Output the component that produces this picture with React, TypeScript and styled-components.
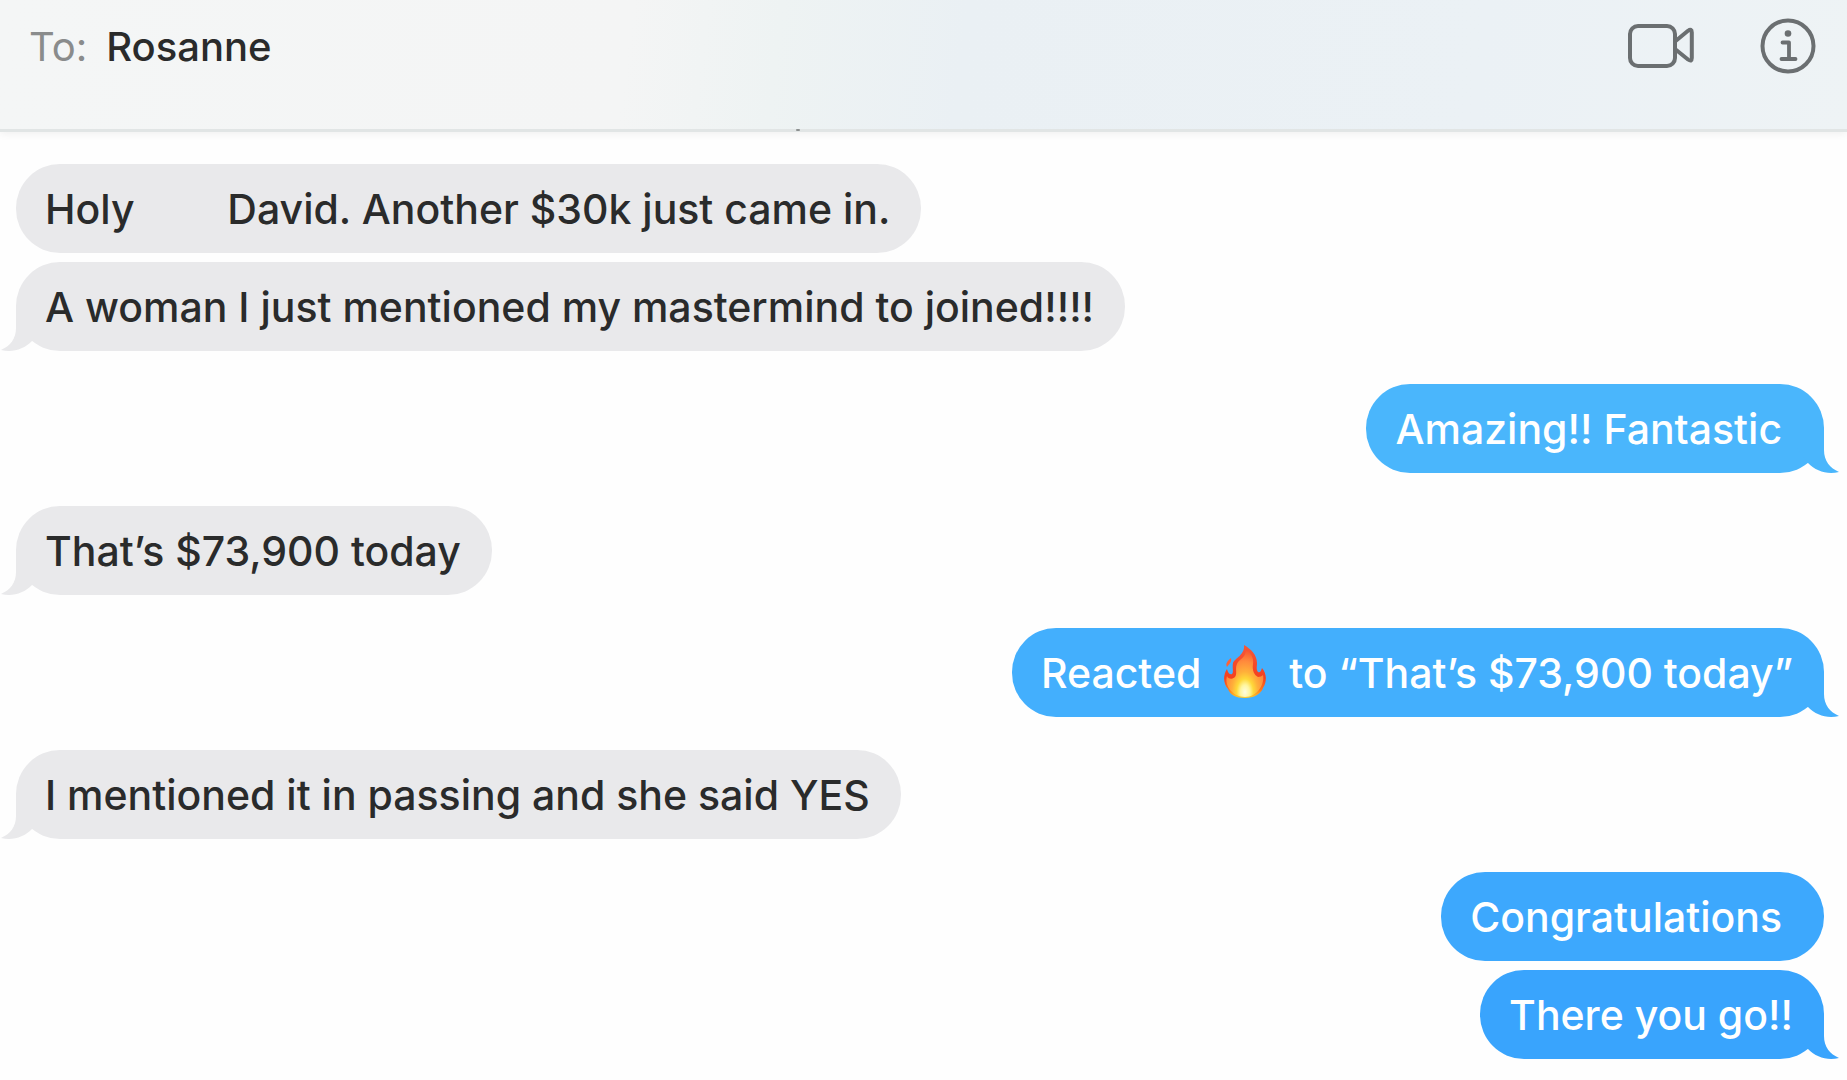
import React from "react";
import styled, { createGlobalStyle } from "styled-components";

const GlobalStyle = createGlobalStyle`
  *, *::before, *::after {
    box-sizing: border-box;
  }
  body {
    margin: 0;
    background: #fefefe;
    color: #2a2b2b;
    font-family: Inter, "Liberation Sans", sans-serif;
    font-size: 41px;
    font-weight: 500;
    line-height: 51px;
  }
`;

const Window = styled.div`
  display: flex;
  flex-direction: column;
  overflow-x: hidden;
`;

const Header = styled.header`
  position: relative;
  display: flex;
  align-items: center;
  justify-content: space-between;
  padding: 18px 31px 55px 29px;
  border-bottom: 3px solid #e1e5e5;
  background: linear-gradient(97deg, #f4f6f6 0%, #f4f5f5 34%, #eef3f3 42%, #eaf0f4 52%, #ebf1f5 80%, #eef3f5 100%);
  box-shadow: 0 2px 8px rgba(0, 0, 0, 0.06);
`;

const ClippedMark = styled.span`
  position: absolute;
  left: 43%;
  bottom: -2px;
  width: 4px;
  height: 2px;
  margin-left: 2px;
  border-radius: 1px;
  background: #8c9090;
`;

const Recipient = styled.h1`
  display: flex;
  gap: 19px;
  margin: 0;
  font-size: 40px;
  font-weight: 500;
`;

const RecipientLabel = styled.span`
  color: #8a8c8c;
  font-weight: 400;
`;

const Actions = styled.div`
  display: flex;
  align-items: center;
  gap: 65px;
`;

const IconButton = styled.button`
  display: flex;
  padding: 0;
  border: 0;
  background: none;
  color: #6b6f71;
  cursor: pointer;
`;

const Thread = styled.main`
  display: flex;
  flex-direction: column;
  gap: 33px;
  padding: 32px 23px 20px 16px;
`;

const Group = styled.section<{ $sent: boolean }>`
  display: flex;
  flex-direction: column;
  align-items: ${(p) => (p.$sent ? "flex-end" : "flex-start")};
  gap: 9px;
`;

const Bubble = styled.p<{ $sent: boolean; $color: string }>`
  position: relative;
  margin: 0;
  padding: 20px 31px 18px 29px;
  border-radius: 44px;
  background: ${(p) => p.$color};
  color: ${(p) => (p.$sent ? "#fff" : "inherit")};
  white-space: pre-wrap;
`;

const TailShape = styled.svg<{ $sent: boolean; $color: string }>`
  position: absolute;
  bottom: 0;
  ${(p) => (p.$sent ? "right: -15px; transform: scaleX(-1);" : "left: -15px;")}
  fill: ${(p) => p.$color};
`;

const Blank = styled.span`
  display: inline-block;
  width: 71px;
`;

const Flame = styled.svg`
  width: 66px;
  height: 56px;
  vertical-align: 0;
  margin: -12px 0;
`;

function VideoIcon() {
  return (
    <svg width="68" height="46" viewBox="0 0 68 46" fill="none" stroke="currentColor" strokeWidth="4" strokeLinejoin="round" aria-hidden="true">
      <rect x="3" y="3" width="45" height="40" rx="8" />
      <path d="M48 18.500L61 7.800Q64.800 5.200 64.800 9.500V35Q64.800 39.300 61 36.500L48 26" />
    </svg>
  );
}

function InfoIcon() {
  return (
    <svg width="56" height="56" viewBox="0 0 56 56" fill="none" stroke="currentColor" aria-hidden="true">
      <circle cx="28" cy="28" r="25.500" strokeWidth="4" />
      <circle cx="28" cy="15.500" r="3.300" fill="currentColor" stroke="none" />
      <path d="M22.500 24.500H29V41M21.500 41H35.500" strokeWidth="3.800" strokeLinecap="round" strokeLinejoin="round" />
    </svg>
  );
}

function FireEmoji() {
  return (
    <Flame viewBox="0 0 60 56" role="img" aria-label="fire">
      <defs>
        <radialGradient id="flame" gradientUnits="userSpaceOnUse" cx="30" cy="48" r="44" gradientTransform="translate(30 48) scale(0.640 1) translate(-30 -48)">
          <stop offset="0" stopColor="#fffde0" />
          <stop offset="0.160" stopColor="#fff6a0" />
          <stop offset="0.300" stopColor="#ffd83a" />
          <stop offset="0.460" stopColor="#ffb03a" />
          <stop offset="0.700" stopColor="#ff8a3c" />
          <stop offset="1" stopColor="#f5492c" />
        </radialGradient>
        <linearGradient id="flameEdge" x1="0" y1="0" x2="0" y2="1">
          <stop offset="0" stopColor="#f5583a" />
          <stop offset="0.620" stopColor="#f4401f" />
          <stop offset="0.850" stopColor="#ff7a1c" />
          <stop offset="1" stopColor="#ffd02c" />
        </linearGradient>
      </defs>
      <path fill="url(#flameEdge)" d="M29 1C36 5 42 11 42 19C42 23 41 25 43 28C46 29 46 26 47 24C52 30 52 38 48 44C46 50 39 54 30 54C21 54 15 51 13 45C8 39 8 31 12 25C13 28 14 31 17 30C19 28 17 24 18 19C20 14 30 11 29 1Z" />
      <path fill="#ff6136" d="M16 14C17 18 14 20 12 23C10 19 13 17 16 14Z" />
      <path fill="url(#flame)" d="M31 5C36 9 39 14 38 20C37 26 39 31 43 33C45 33 47 32 48 31C50 39 43 53 30 53C17 53 9 41 12 32C13 35 17 36 20 33C23 29 19 24 23 18C27 14 31 12 31 5Z" />
    </Flame>
  );
}

function Tail({ sent, color }: { sent: boolean; color: string }) {
  return (
    <TailShape $sent={sent} $color={color} width="42" height="45" viewBox="0 0 42 45" aria-hidden="true">
      <path d="M15 0V22C15 33 9 40 0 44C12 47 23 43 31 35L42 20V0Z" />
    </TailShape>
  );
}

type Message = { body: React.ReactNode; color: string };
type MessageGroup = { sent: boolean; messages: Message[] };

const RECEIVED = "#e9e9eb";

const groups: MessageGroup[] = [
  {
    sent: false,
    messages: [
      { body: <>Holy <Blank /> David. Another $30k just came in.</>, color: RECEIVED },
      { body: "A woman I just mentioned my mastermind to joined!!!!", color: RECEIVED },
    ],
  },
  { sent: true, messages: [{ body: "Amazing!! Fantastic\u00a0", color: "#4ab6fc" }] },
  { sent: false, messages: [{ body: "That’s $73,900 today", color: RECEIVED }] },
  {
    sent: true,
    messages: [{ body: <>Reacted <FireEmoji /> to “That’s $73,900 today”</>, color: "#43affd" }],
  },
  { sent: false, messages: [{ body: "I mentioned it in passing and she said YES", color: RECEIVED }] },
  {
    sent: true,
    messages: [
      { body: "Congratulations\u00a0", color: "#3da8fd" },
      { body: "There you go!!", color: "#39a4fd" },
    ],
  },
];

export default function App() {
  return (
    <Window>
      <GlobalStyle />
      <Header>
        <Recipient>
          <RecipientLabel>To:</RecipientLabel>
          <span>Rosanne</span>
        </Recipient>
        <Actions>
          <IconButton type="button" aria-label="Video call">
            <VideoIcon />
          </IconButton>
          <IconButton type="button" aria-label="Conversation details">
            <InfoIcon />
          </IconButton>
        </Actions>
        <ClippedMark />
      </Header>
      <Thread>
        {groups.map((group, g) => (
          <Group key={g} $sent={group.sent}>
            {group.messages.map((message, m) => (
              <Bubble key={m} $sent={group.sent} $color={message.color}>
                {m === group.messages.length - 1 && <Tail sent={group.sent} color={message.color} />}
                {message.body}
              </Bubble>
            ))}
          </Group>
        ))}
      </Thread>
    </Window>
  );
}
